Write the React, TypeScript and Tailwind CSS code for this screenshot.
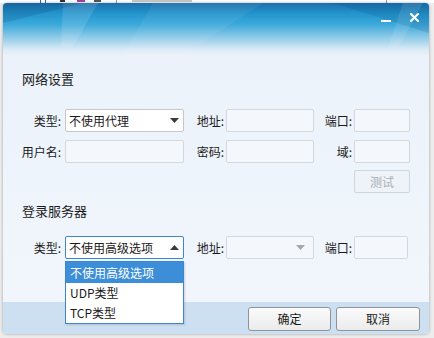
import { ReactNode } from 'react'

const font = { fontFamily: '"Noto Sans CJK SC", "Noto Sans", sans-serif' }

function Label({ children, w }: { children: ReactNode; w: string }) {
  return <div className={`${w} shrink-0 text-right pr-[2px] text-[12px] text-[#1a1a1a] leading-none`}>{children}</div>
}

function TextBox({ w }: { w: string }) {
  return <div className={`${w} h-[23px] shrink-0 rounded-[2px] border border-[#d2d8de] bg-[#f4f8fd]`} />
}

function Caret({ up, color }: { up?: boolean; color: string }) {
  return (
    <svg width="9" height="5" viewBox="0 0 9 5" className="shrink-0">
      {up ? <polygon points="0,5 9,5 4.5,0" fill={color} /> : <polygon points="0,0 9,0 4.5,5" fill={color} />}
    </svg>
  )
}

export default function App() {
  return (
    <div className="relative w-[434px] h-[338px] overflow-hidden bg-[#ededed]" style={font}>
      {/* window behind, peeking out above */}
      <div className="absolute left-0 top-0 w-full h-[3px] bg-white">
        <div className="absolute left-[40px] top-0 w-[6px] h-[3px] border-x border-[#4a5aa8]" />
        <div className="absolute left-[60px] top-0 w-[5px] h-[2px] bg-[#333]" />
        <div className="absolute left-[77px] top-0 w-[8px] h-[2px] bg-[#b03aa0]" />
        <div className="absolute left-[94px] top-0 w-[7px] h-[2px] bg-[#555]" />
        <div className="absolute left-[116px] top-0 w-[1px] h-[3px] bg-[#999]" />
        <div className="absolute left-[132px] top-0 w-[60px] h-[2px] bg-[#c8c8c8]" />
        <div className="absolute left-[386px] top-0 w-[1px] h-[3px] bg-[#999]" />
      </div>

      <div className="ml-[3px] mt-[3px] w-[426px] h-[331px] rounded-[4px] overflow-hidden shadow-[0_0_3px_rgba(0,0,0,0.35)] bg-[linear-gradient(180deg,#eaf1fa_0%,#f1f6fc_85%)] flex flex-col relative">
        {/* title bar */}
        <div className="relative h-[52px] shrink-0 bg-[linear-gradient(180deg,#1b6fab_0%,#2497cf_22%,#3eaadb_42%,#95cde9_68%,#dcebf7_90%,#eaf1fa_100%)]">
          <svg className="absolute inset-0" width="426" height="52" viewBox="0 0 426 52">
            <polygon points="60,0 95,0 70,44 58,44" fill="#ffffff" opacity="0.12" />
            <polygon points="0,0 80,0 0,20" fill="#0a3f70" opacity="0.18" />
            <polygon points="150,0 260,0 180,52 120,52" fill="#ffffff" opacity="0.06" />
            <polygon points="330,0 426,0 426,30" fill="#0a3f70" opacity="0.15" />
            <polygon points="400,0 420,0 395,45 385,45" fill="#ffffff" opacity="0.1" />
          </svg>
          <div className="absolute right-[38px] top-[17px] w-[10px] h-[2px] bg-white" />
          <svg className="absolute right-[10px] top-[10px]" width="9" height="9" viewBox="0 0 9 9">
            <path d="M1 1 L8 8 M8 1 L1 8" stroke="#fff" strokeWidth="2" strokeLinecap="square" />
          </svg>
        </div>

        {/* content */}
        <div className="flex-1 flex flex-col">
          <div className="pl-[19px] pt-[17px] text-[13px] text-[#1a1a1a] leading-none">网络设置</div>

          <div className="flex items-center mt-[24px]">
            <Label w="w-[60px]">类型:</Label>
            <div className="ml-[2px] w-[119px] h-[23px] shrink-0 rounded-[2px] border border-[#c3c8ce] bg-white flex items-center pl-[3px] pr-[4px]">
              <span className="flex-1 text-[12px] text-[#1a1a1a]">不使用代理</span>
              <Caret color="#3a3a3a" />
            </div>
            <Label w="w-[42px]">地址:</Label>
            <TextBox w="w-[88px]" />
            <Label w="w-[40px]">端口:</Label>
            <TextBox w="w-[56px]" />
          </div>

          <div className="flex items-center mt-[8px]">
            <Label w="w-[60px]">用户名:</Label>
            <div className="ml-[2px]">
              <TextBox w="w-[119px]" />
            </div>
            <Label w="w-[42px]">密码:</Label>
            <TextBox w="w-[88px]" />
            <Label w="w-[40px]">域:</Label>
            <TextBox w="w-[56px]" />
          </div>

          <div className="flex mt-[7px] pl-[351px]">
            <div className="w-[56px] h-[23px] rounded-[2px] border border-[#cfd6de] bg-[#eef3f9] flex items-center justify-center text-[12px] text-[#a9aeb4]">
              测试
            </div>
          </div>

          <div className="pl-[19px] mt-[11px] text-[13px] text-[#1a1a1a] leading-none">登录服务器</div>

          <div className="flex items-center mt-[19px] relative">
            <Label w="w-[60px]">类型:</Label>
            <div className="ml-[2px] w-[119px] h-[23px] shrink-0 rounded-[2px] border border-[#3d86d4] bg-white flex items-center pl-[3px] pr-[4px]">
              <span className="flex-1 text-[12px] text-[#1a1a1a]">不使用高级选项</span>
              <Caret up color="#3a3a3a" />
            </div>
            <Label w="w-[42px]">地址:</Label>
            <div className="w-[88px] h-[23px] shrink-0 rounded-[2px] border border-[#d2d8de] bg-[#f4f8fd] flex items-center justify-end pr-[8px]">
              <Caret color="#a3a8ad" />
            </div>
            <Label w="w-[40px]">端口:</Label>
            <TextBox w="w-[54px]" />

            {/* open dropdown list */}
            <div className="absolute left-[62px] top-[25px] z-10 w-[119px] h-[63px] border border-[#3d86d4] bg-white text-[12px] shadow-[1px_1px_2px_rgba(0,0,0,0.15)]">
              <div className="h-[21px] bg-[#3d8ed8] text-white flex items-center pl-[4px]">不使用高级选项</div>
              <div className="h-[20px] flex items-center pl-[4px] text-[#1a1a1a]">UDP类型</div>
              <div className="h-[20px] flex items-center pl-[4px] text-[#1a1a1a]">TCP类型</div>
            </div>
          </div>
        </div>

        {/* footer */}
        <div className="h-[32px] shrink-0 bg-[#cde0f1] flex items-start justify-end gap-[5px] pt-[5px] pr-[9px]">
          <div className="w-[83px] h-[24px] rounded-[3px] border border-[#8d939a] bg-[linear-gradient(180deg,#fbfbfb,#ebebeb)] flex items-center justify-center text-[12px] text-[#1a1a1a]">
            确定
          </div>
          <div className="w-[84px] h-[24px] rounded-[3px] border border-[#8d939a] bg-[linear-gradient(180deg,#fbfbfb,#ebebeb)] flex items-center justify-center text-[12px] text-[#1a1a1a]">
            取消
          </div>
        </div>
      </div>
    </div>
  )
}
